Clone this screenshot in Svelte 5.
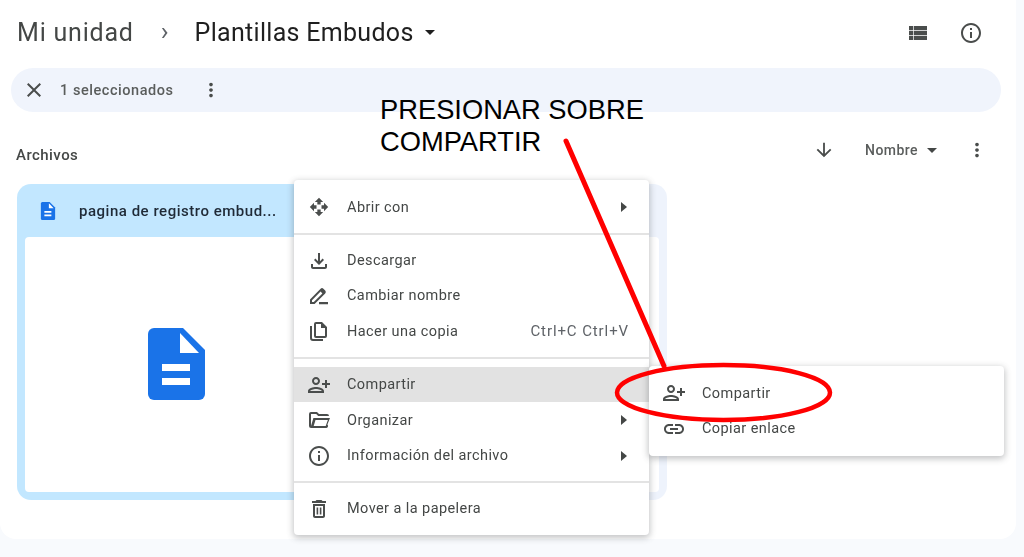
<script>
  const icons = {
    close: 'M19 6.41L17.59 5 12 10.59 6.41 5 5 6.41 10.59 12 5 17.59 6.41 19 12 13.41 17.59 19 19 17.59 13.41 12z',
    more: 'M12 8c1.1 0 2-.9 2-2s-.9-2-2-2-2 .9-2 2 .9 2 2 2zm0 2c-1.1 0-2 .9-2 2s.9 2 2 2 2-.9 2-2-.9-2-2-2zm0 6c-1.1 0-2 .9-2 2s.9 2 2 2 2-.9 2-2-.9-2-2-2z',
    down: 'M20 12l-1.41-1.41L13 16.17V4h-2v12.17l-5.58-5.59L4 12l8 8 8-8z',
    info: 'M11 7h2v2h-2zm0 4h2v6h-2zm1-9C6.48 2 2 6.48 2 12s4.48 10 10 10 10-4.48 10-10S17.52 2 12 2zm0 18c-4.41 0-8-3.59-8-8s3.59-8 8-8 8 3.59 8 8-3.59 8-8 8z',
    list: 'M3 5h4v4.2H3zM7.7 5H21v4.2H7.7zM3 9.9h4v4.2H3zM7.7 9.9H21v4.2H7.7zM3 14.8h4V19H3zM7.7 14.8H21V19H7.7z',
    open: 'M10 9h4V6h3l-5-5-5 5h3v3zm-1 1H6V7l-5 5 5 5v-3h3v-4zm14 2l-5-5v3h-3v4h3v3l5-5zm-9 3h-4v3H7l5 5 5-5h-3v-3z',
    download: 'M18 15v3H6v-3H4v3c0 1.1.9 2 2 2h12c1.1 0 2-.9 2-2v-3h-2zm-1-4l-1.41-1.41L13 12.17V4h-2v8.17L8.41 9.59 7 11l5 5 5-5z',
    rename: 'M3 20v-4.6L13.6 4.8a2 2 0 0 1 2.8 0l1.8 1.8a2 2 0 0 1 0 2.8L7.6 20H3zm2-2h1.8l8.6-8.6-1.8-1.8L5 16.2V18zm7 0h9v2.2h-9z',
    copy: 'M9 3h6l5 5v9a2 2 0 0 1-2 2H9a2 2 0 0 1-2-2V5a2 2 0 0 1 2-2zm0 2v12h9V9h-4V5H9zM3 7h2v12a1 1 0 0 0 1 1h10v2H6a3 3 0 0 1-3-3V7z',
    share: 'M9 12c2.21 0 4-1.79 4-4s-1.79-4-4-4-4 1.79-4 4 1.79 4 4 4zm0-6c1.1 0 2 .9 2 2s-.9 2-2 2-2-.9-2-2 .9-2 2-2zm0 8c-2.67 0-8 1.34-8 4v2h16v-2c0-2.66-5.33-4-8-4zm-6 4c.2-.71 3.3-2 6-2 2.69 0 5.78 1.28 6 2H3zM20 10V7h-2v3h-3v2h3v3h2v-3h3v-2h-3z',
    folder: 'M4 20a2 2 0 0 1-2-2V6a2 2 0 0 1 2-2h6l2 2h8a2 2 0 0 1 2 2H11.2l-2-2H4v12l2.4-8H23l-2.6 6.6A2 2 0 0 1 18.5 20H4zm3.9-6L6.7 18h12l1.6-4.4.6-1.6H8.5z',
    trash: 'M6 19c0 1.1.9 2 2 2h8c1.1 0 2-.9 2-2V7H6v12zM8 9h8v10H8V9zm7.5-5l-1-1h-5l-1 1H5v2h14V4zM9.6 10.5h1.6v7H9.6zm3.2 0h1.6v7h-1.6z',
    link: 'M3.9 12c0-1.71 1.39-3.1 3.1-3.1h4V7H7c-2.76 0-5 2.24-5 5s2.24 5 5 5h4v-1.9H7c-1.71 0-3.1-1.39-3.1-3.1zM8 13h8v-2H8v2zm9-6h-4v1.9h4c1.71 0 3.1 1.39 3.1 3.1s-1.39 3.1-3.1 3.1h-4V17h4c2.76 0 5-2.24 5-5s-2.24-5-5-5z'
  };

  const menuGroups = [
    [{ icon: 'open', label: 'Abrir con', arrow: true }],
    [
      { icon: 'download', label: 'Descargar' },
      { icon: 'rename', label: 'Cambiar nombre' },
      { icon: 'copy', label: 'Hacer una copia', keys: 'Ctrl+C Ctrl+V' }
    ],
    [
      { icon: 'share', label: 'Compartir', active: true },
      { icon: 'folder', label: 'Organizar', arrow: true },
      { icon: 'info', label: 'Información del archivo', arrow: true }
    ],
    [{ icon: 'trash', label: 'Mover a la papelera' }]
  ];

  const subItems = [
    { icon: 'share', label: 'Compartir' },
    { icon: 'link', label: 'Copiar enlace' }
  ];
</script>

{#snippet icon(name, cls = '')}
  <svg class="icon {cls}" viewBox="0 0 24 24"><path fill-rule="evenodd" d={icons[name]} /></svg>
{/snippet}

{#snippet doc(cls)}
  <svg class={cls} viewBox="0 0 57 72">
    <path fill="#1a73e8" d="M6 0H35L57 22V66a6 6 0 0 1-6 6H6a6 6 0 0 1-6-6V6a6 6 0 0 1 6-6z" />
    <path fill="#fff" d="M32 5L51 25H32z" />
    <path fill="#fff" d="M14 36h28v7H14zM14 50h28v7H14z" />
  </svg>
{/snippet}

<div class="page">
  <div class="panel">
    <header class="crumbs">
      <span class="root">Mi unidad</span>
      <span class="chevron">›</span>
      <span class="current">Plantillas Embudos</span>
      <span class="caret big"></span>
      <div class="top-actions">
        {@render icon('list')}
        {@render icon('info')}
      </div>
    </header>

    <div class="selection">
      {@render icon('close', 'muted')}
      <span class="count">1 seleccionados</span>
      {@render icon('more', 'small')}
    </div>

    <div class="sortbar">
      <span class="section">Archivos</span>
      <div class="sort">
        {@render icon('down', 'small')}
        <span class="sort-name">Nombre</span>
        <span class="caret"></span>
        {@render icon('more', 'small end')}
      </div>
    </div>

    <div class="card">
      <div class="card-head">
        {@render doc('doc-small')}
        <span class="card-title">pagina de registro embud...</span>
      </div>
      <div class="card-body">
        {@render doc('doc-big')}
      </div>
    </div>
  </div>

  <div class="menu">
    {#each menuGroups as group, i}
      {#if i > 0}<div class="divider"></div>{/if}
      {#each group as item}
        <div class="item" class:active={item.active}>
          {@render icon(item.icon, item.icon)}
          <span class="label">{item.label}</span>
          {#if item.keys}<span class="keys">{item.keys}</span>{/if}
          {#if item.arrow}<span class="arrow"></span>{/if}
        </div>
      {/each}
    {/each}
  </div>

  <div class="menu submenu">
    {#each subItems as item}
      <div class="item">
        {@render icon(item.icon)}
        <span class="label">{item.label}</span>
      </div>
    {/each}
  </div>

  <svg class="marks" viewBox="0 0 1024 557">
    <line x1="566" y1="141" x2="664" y2="366" stroke="#f00" stroke-width="5" stroke-linecap="round" />
    <ellipse cx="723.5" cy="392.5" rx="106.5" ry="27.5" fill="none" stroke="#f00" stroke-width="4.5" />
  </svg>

  <div class="note">PRESIONAR SOBRE<br />COMPARTIR</div>
</div>

<style>
  :global(body) {
    margin: 0;
  }

  .page {
    position: relative;
    width: 1024px;
    height: 557px;
    overflow: hidden;
    background: #f8fafd;
    font-family: Roboto, "Liberation Sans", sans-serif;
    color: #444746;
  }

  .panel {
    width: 1016px;
    height: 539px;
    background: #fff;
    border-radius: 0 0 16px 16px;
    filter: blur(0.45px);
    overflow: hidden;
  }

  .icon {
    display: block;
    flex: none;
    width: 24px;
    height: 24px;
    fill: #4a4d4c;
  }

  .small {
    width: 22px;
    height: 22px;
  }

  .caret {
    width: 0;
    height: 0;
    border-left: 5px solid transparent;
    border-right: 5px solid transparent;
    border-top: 5px solid #444746;
  }

  .crumbs {
    display: flex;
    align-items: center;
    height: 65px;
    padding: 0 33px 0 17px;
    font-size: 25px;
    color: #1f1f1f;
  }

  .root {
    color: #444746;
    letter-spacing: 0.8px;
  }

  .chevron {
    margin: -3px 26px 0 27px;
    font-size: 26px;
    color: #5f6368;
  }

  .current {
    letter-spacing: 0.3px;
  }

  .caret.big {
    margin-left: 11px;
    border-top-color: #1f1f1f;
  }

  .top-actions {
    display: flex;
    gap: 29px;
    margin-left: auto;
  }

  .selection {
    display: flex;
    align-items: center;
    height: 44px;
    margin: 3px 15px 0 11px;
    padding-left: 11px;
    border-radius: 22px;
    background: #f0f4fc;
  }

  .count {
    margin: 0 26px 0 14px;
    font-size: 14.5px;
    font-weight: 500;
    letter-spacing: 0.55px;
    color: #5a5d5c;
  }

  .sortbar {
    display: flex;
    align-items: center;
    justify-content: space-between;
    height: 48px;
    margin-top: 14px;
    padding: 0 28px 0 16px;
  }

  .section {
    margin-top: 9px;
    font-size: 15px;
    font-weight: 500;
    letter-spacing: 0.45px;
    color: #444746;
  }

  .sort {
    display: flex;
    align-items: center;
  }

  .sort-name {
    margin: 0 9px 0 30px;
    font-size: 14px;
    font-weight: 500;
    letter-spacing: 0.45px;
    color: #5a5d5c;
  }

  .end {
    margin-left: 29px;
  }

  .card {
    display: flex;
    flex-direction: column;
    width: 650px;
    height: 316px;
    margin: 10px 0 0 17px;
    box-sizing: border-box;
    padding: 0 8px 8px;
    border-radius: 14px;
    background: linear-gradient(to right, #c2e7ff 60%, #eef3fc 60%);
  }

  .card-head {
    display: flex;
    align-items: center;
    height: 53px;
    flex: none;
    padding-left: 15px;
  }

  .doc-small {
    width: 16px;
    height: 18px;
    margin-top: 1px;
  }

  .card-title {
    margin-left: 23px;
    font-size: 15px;
    font-weight: 500;
    letter-spacing: 0.52px;
    color: #1f2a37;
  }

  .card-body {
    flex: 1;
    display: flex;
    align-items: center;
    padding-left: 123px;
    border-radius: 4px;
    background: #fff;
  }

  .doc-big {
    width: 57px;
    height: 72px;
    margin-top: -2px;
  }

  .menu {
    position: absolute;
    left: 294px;
    top: 180px;
    width: 355px;
    box-sizing: border-box;
    padding: 9.5px 0 8.5px;
    border-radius: 4px;
    background: #fff;
    box-shadow: 0 2px 6px 1px rgba(60, 64, 67, 0.3);
    filter: blur(0.45px);
  }

  .submenu {
    left: 649px;
    top: 366px;
    height: 90px;
  }

  .item {
    display: flex;
    align-items: center;
    height: 35.4px;
    padding: 0 22px 0 13px;
  }

  .item.active {
    background: #e2e2e2;
  }

  .open {
    width: 20px;
    height: 20px;
    margin: 0 2px;
  }

  .label {
    margin-left: 16px;
    font-size: 14.5px;
    letter-spacing: 0.42px;
    color: #444746;
  }

  .keys {
    margin-left: auto;
    margin-right: -2px;
    font-size: 15px;
    letter-spacing: 0.9px;
    color: #5f6368;
  }

  .arrow {
    width: 0;
    height: 0;
    margin-left: auto;
    border-top: 5px solid transparent;
    border-bottom: 5px solid transparent;
    border-left: 6px solid #444746;
  }

  .divider {
    height: 2px;
    margin: 8px 0;
    background: #e3e3e3;
  }

  .marks {
    position: absolute;
    inset: 0;
    width: 1024px;
    height: 557px;
    pointer-events: none;
  }

  .note {
    position: absolute;
    left: 380px;
    top: 94px;
    font-family: "Liberation Sans", Arial, sans-serif;
    font-size: 27.3px;
    line-height: 32px;
    color: #000;
  }
</style>
